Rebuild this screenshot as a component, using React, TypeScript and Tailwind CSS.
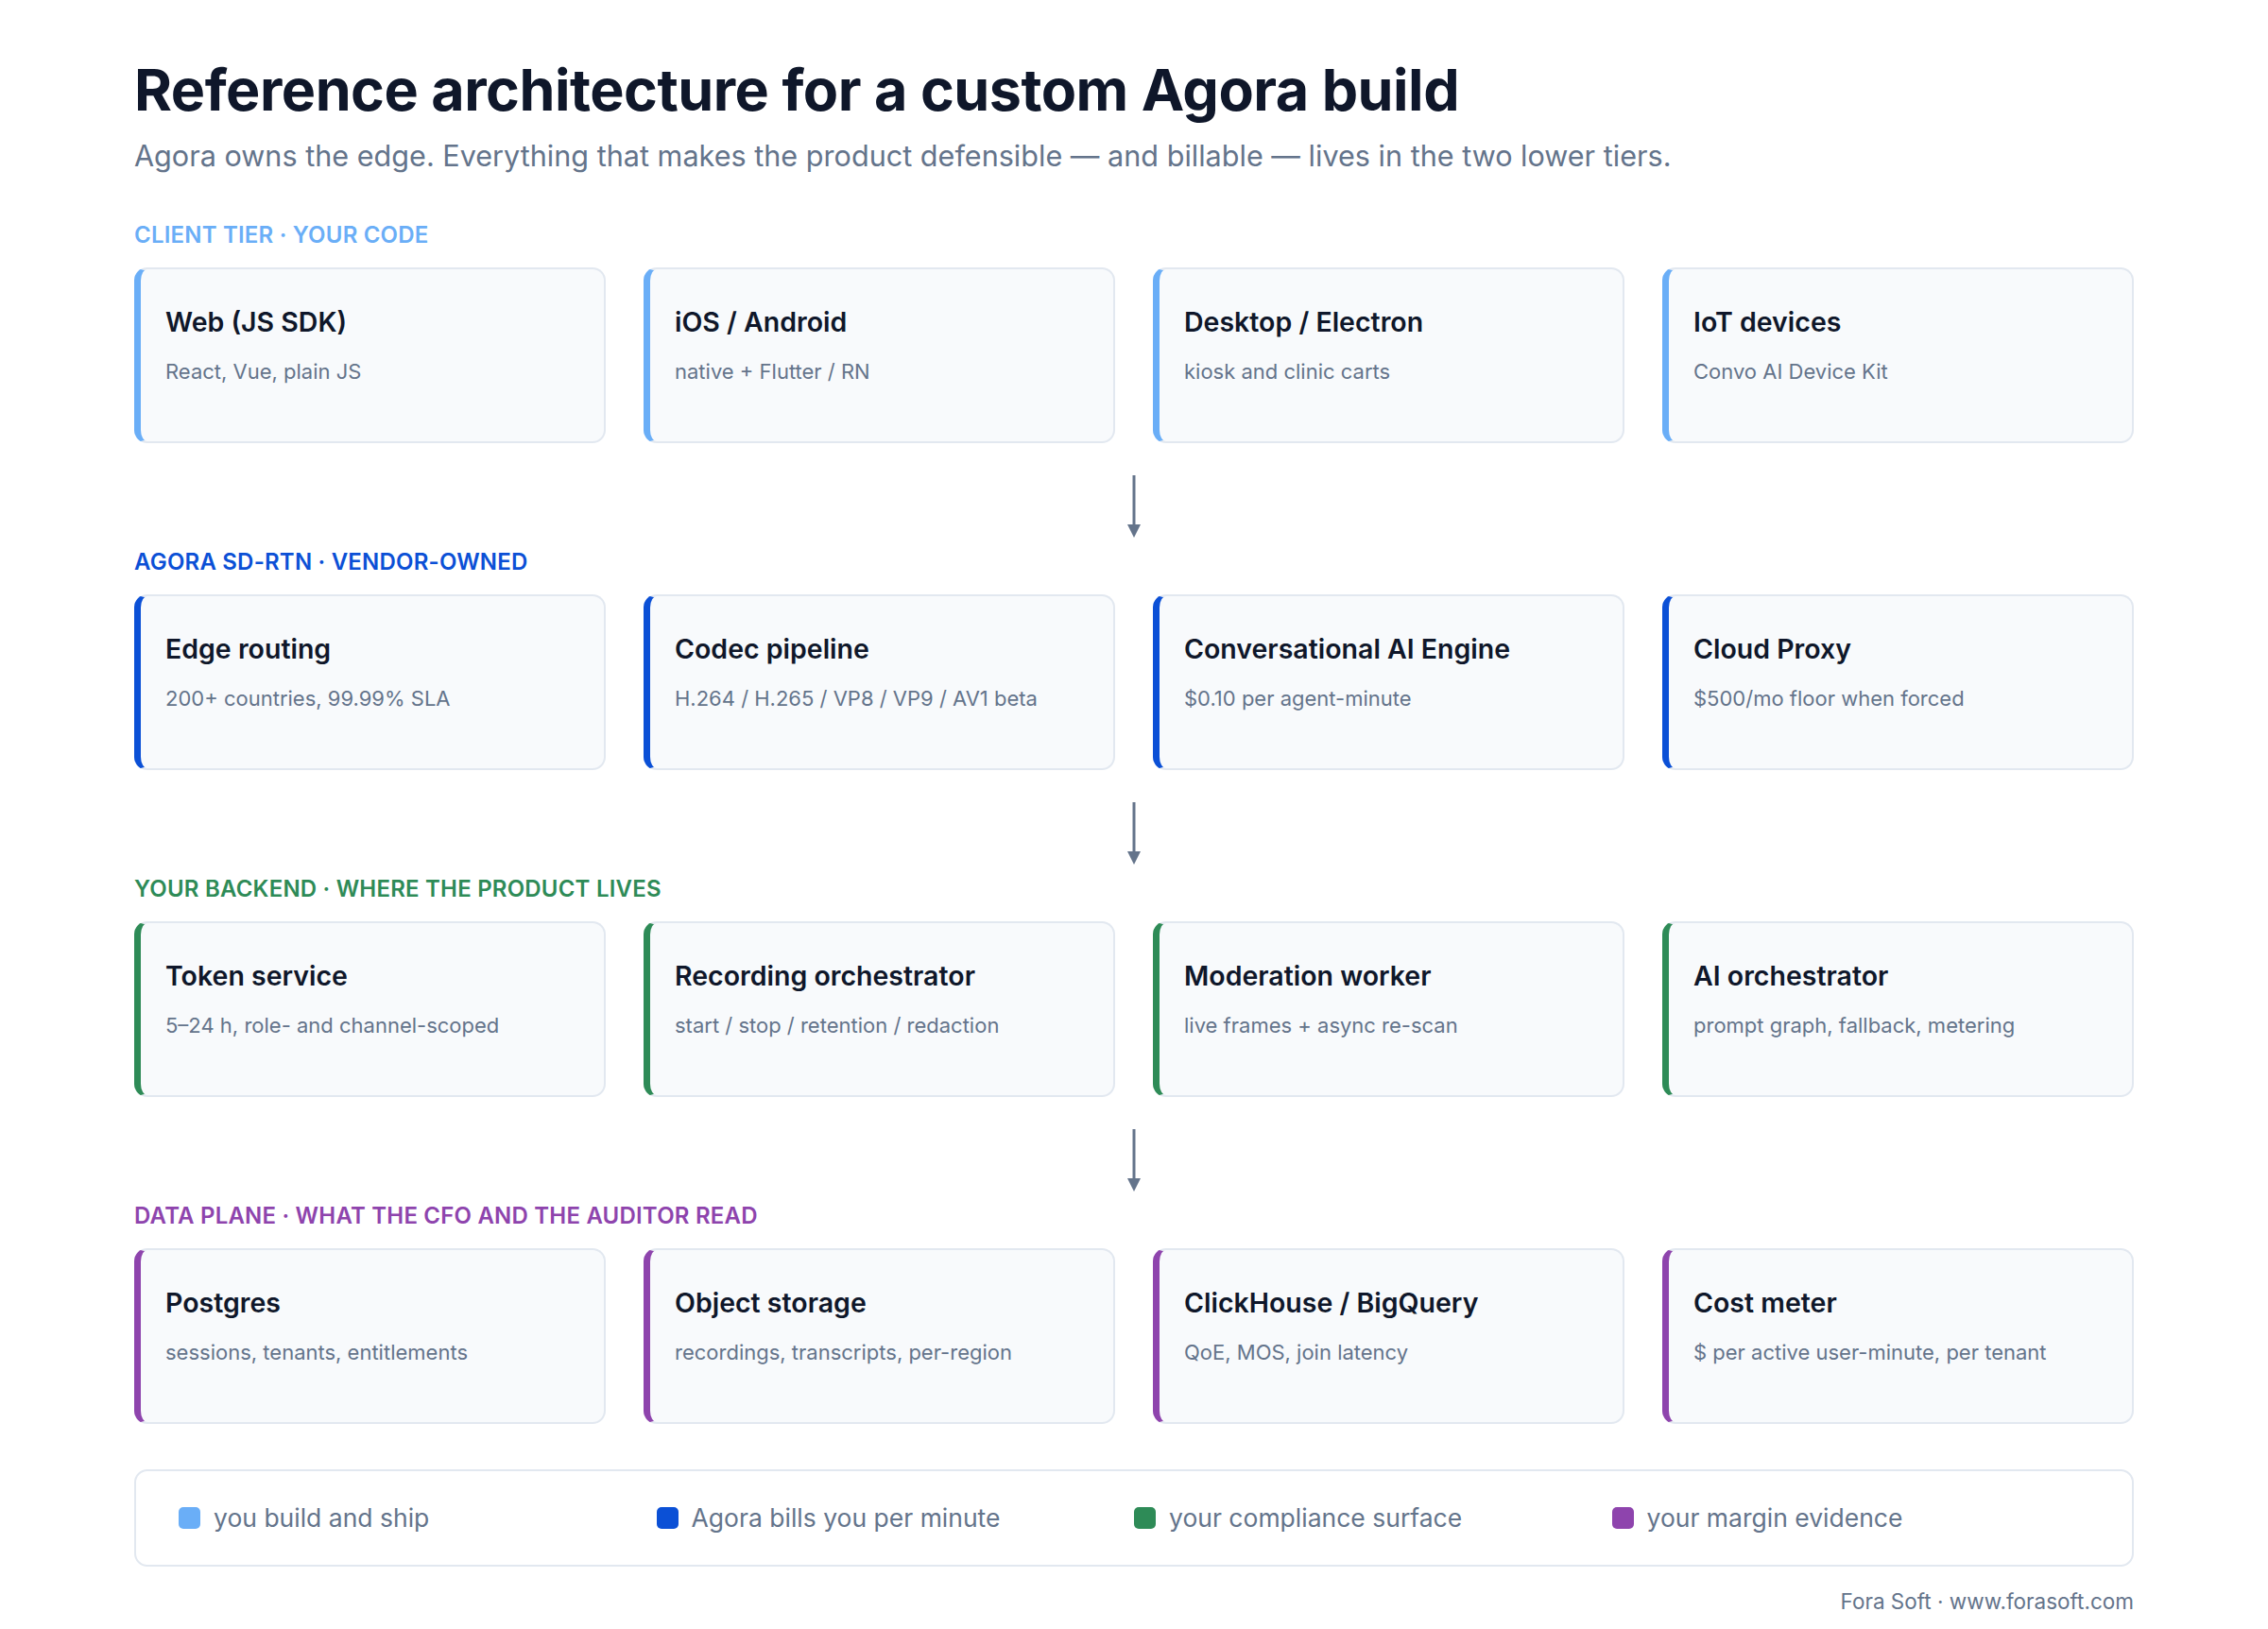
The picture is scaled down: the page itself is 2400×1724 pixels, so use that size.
import React from "react";

const tiers = [
  { label: "CLIENT TIER · YOUR CODE", text: "text-[#6aaef7]", bar: "border-l-[#6aaef7]", cards: [["Web (JS SDK)", "React, Vue, plain JS"], ["iOS / Android", "native + Flutter / RN"], ["Desktop / Electron", "kiosk and clinic carts"], ["IoT devices", "Convo AI Device Kit"]] },
  { label: "AGORA SD-RTN · VENDOR-OWNED", text: "text-[#0b50d6]", bar: "border-l-[#0b50d6]", cards: [["Edge routing", "200+ countries, 99.99% SLA"], ["Codec pipeline", "H.264 / H.265 / VP8 / VP9 / AV1 beta"], ["Conversational AI Engine", "$0.10 per agent-minute"], ["Cloud Proxy", "$500/mo floor when forced"]] },
  { label: "YOUR BACKEND · WHERE THE PRODUCT LIVES", text: "text-[#2e8b57]", bar: "border-l-[#2e8b57]", cards: [["Token service", "5–24 h, role- and channel-scoped"], ["Recording orchestrator", "start / stop / retention / redaction"], ["Moderation worker", "live frames + async re-scan"], ["AI orchestrator", "prompt graph, fallback, metering"]] },
  { label: "DATA PLANE · WHAT THE CFO AND THE AUDITOR READ", text: "text-[#8e44ad]", bar: "border-l-[#8e44ad]", cards: [["Postgres", "sessions, tenants, entitlements"], ["Object storage", "recordings, transcripts, per-region"], ["ClickHouse / BigQuery", "QoE, MOS, join latency"], ["Cost meter", "$ per active user-minute, per tenant"]] },
];

const legend = [
  ["bg-[#6aaef7]", "you build and ship"],
  ["bg-[#0b50d6]", "Agora bills you per minute"],
  ["bg-[#2e8b57]", "your compliance surface"],
  ["bg-[#8e44ad]", "your margin evidence"],
];

function Arrow() {
  return (
    <div className="flex justify-center h-[112px] pt-[34px]">
      <svg width="20" height="68" viewBox="0 0 20 68">
        <line x1="10" y1="0" x2="10" y2="60" stroke="#64748b" strokeWidth="3" />
        <path d="M3 52 L10 66 L17 52 Z" fill="#64748b" />
      </svg>
    </div>
  );
}

export default function App() {
  return (
    <div className="w-[2400px] h-[1724px] bg-white px-[142px] pt-[58px]" style={{ fontFamily: "Inter, 'Noto Sans', sans-serif" }}>
      <h1 className="text-[61px] leading-[74px] font-bold text-[#0f172a] tracking-[-0.5px]">Reference architecture for a custom Agora build</h1>
      <p className="text-[30.6px] leading-[40px] text-[#64748b] mt-[13px]">Agora owns the edge. Everything that makes the product defensible — and billable — lives in the two lower tiers.</p>
      <div className="mt-[50px]">
        {tiers.map((t, i) => (
          <div key={t.label}>
            <div className={`text-[24px] leading-[28px] font-semibold tracking-[0.2px] ${t.text}`}>{t.label}</div>
            <div className="grid grid-cols-4 gap-[40px] mt-[20px]">
              {t.cards.map(([a, b]) => (
                <div key={a} className={`h-[186px] rounded-[14px] border-2 border-[#e2e8f0] border-l-[7px] ${t.bar} bg-[#f8fafc] pl-[26px] pt-[38px]`}>
                  <div className="text-[28.5px] leading-[36px] font-semibold text-[#0f172a]">{a}</div>
                  <div className="text-[22px] leading-[28px] text-[#64748b] mt-[20px]">{b}</div>
                </div>
              ))}
            </div>
            {i < 3 && <Arrow />}
          </div>
        ))}
      </div>
      <div className="mt-[48px] h-[103px] rounded-[14px] border-2 border-[#e2e8f0] flex items-center px-[45px]">
        {legend.map(([c, l]) => (
          <div key={l} className="flex items-center gap-[14px] w-[530px]">
            <span className={`w-[23px] h-[23px] rounded-[5px] ${c}`} />
            <span className="text-[26.5px] text-[#64748b]">{l}</span>
          </div>
        ))}
      </div>
      <div className="text-right text-[22.5px] text-[#64748b] mt-[20px]">Fora Soft · www.forasoft.com</div>
    </div>
  );
}
